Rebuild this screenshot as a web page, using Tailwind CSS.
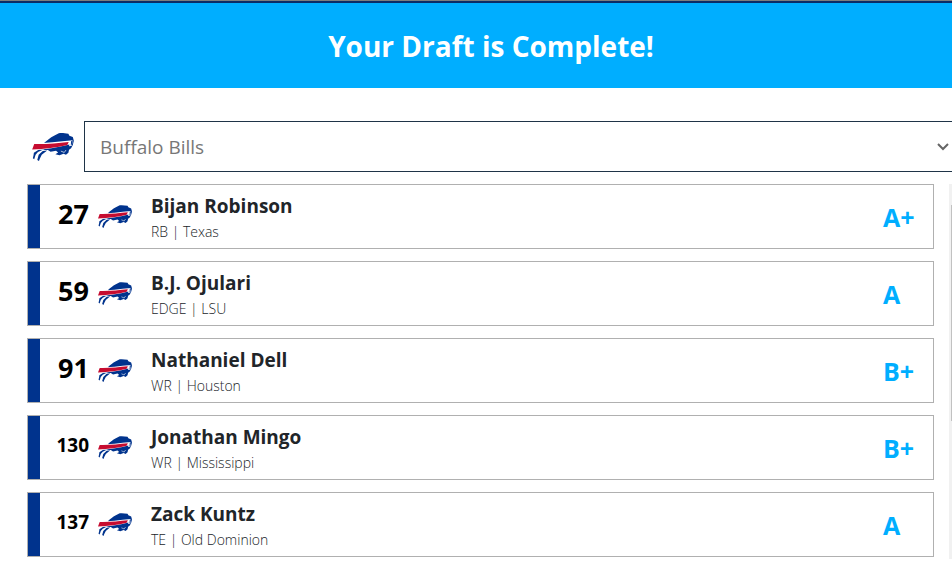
<!DOCTYPE html>
<html lang="en">
<head>
    <meta charset="UTF-8">
    <meta name="viewport" content="width=device-width, initial-scale=1.0">
    <title>Draft Results</title>
    <script src="https://cdn.jsdelivr.net/npm/@tailwindcss/browser@4"></script>
</head>
<body class="bg-white overflow-x-hidden font-['Open_Sans','Noto_Sans',sans-serif] text-[#212529]">
    <!-- Shared team logo -->
    <svg class="hidden">
        <symbol id="bills" viewBox="0 0 122 82">
            <path fill="#00338d" d="M36 28 C46 21 52 14 64 8 L78 1 C88 -1 96 2 106 2 L109 8 L119 12 L122 23 L119 35 L114 45 L108 49 L106 58 L99 64 L92 61 L80 65 L68 62 L76 57 L70 52 L54 55 L46 50 L36 50 L30 47 L35 42Z" />
            <path fill="#00338d" d="M5 58 L20 48 L33 48 L17 56 L10 64 L6 77 L2 74 L4 65Z M19 64 L31 53 L44 51 L28 64 L22 76 L20 82 L15 79Z" />
            <path fill="#fff" d="M5 30 C39 30 78 25 119 21 L116 37 L108 39 L109 34 C76 43 39 49 0 51Z" />
            <path fill="#c60c30" d="M6 32 C42 33 74 29 107 26 L103 35 C72 43 37 47 0 48Z" />
            <path fill="#00338d" d="M114 24 L119 21 L116 33 L113 37Z" />
            <path fill="none" stroke="#fff" stroke-width="2" d="M84 53 L94 57 L99 50" />
        </symbol>
    </svg>

    <div class="w-[calc(100%+30px)]">
        <div class="h-px bg-[#7d7d7d]"></div>
        <header class="bg-[#00aeff] border-t-2 border-[#0b2c66] h-[87px] flex items-center justify-center">
            <h1 class="text-[28px] leading-10 font-bold text-white">Your Draft is Complete!</h1>
        </header>

        <main class="pt-[33px] pl-[27px]">
            <div class="flex items-center pl-[5px]">
                <svg class="w-[42px] h-7 shrink-0 mr-[10px]"><use href="#bills" /></svg>
                <div class="relative grow">
                    <select aria-label="Team" class="appearance-none block w-full h-[51px] border border-[#1f3447] bg-white pt-[2px] pl-[15px] text-[19px] text-[#777]">
                        <option>Buffalo Bills</option>
                    </select>
                    <svg class="absolute right-[33px] top-[22px] w-3 h-2 pointer-events-none" viewBox="0 0 12 8" fill="none" stroke="#666" stroke-width="2"><path d="M1 1 L6 6 L11 1" /></svg>
                </div>
            </div>

            <div class="mt-3 flex">
                <ul id="picks" class="grow flex flex-col gap-3 pb-[2px]"></ul>
                <div class="w-12 shrink-0 pl-[15px]">
                    <div class="h-full bg-[#f1f1f1] pl-[2px] pt-[21px]">
                        <div class="h-[216px] bg-[#c1c1c1]"></div>
                    </div>
                </div>
            </div>
        </main>
    </div>

    <script>
        const picks = [
            [27, 'Bijan Robinson', 'RB | Texas', 'A+'],
            [59, 'B.J. Ojulari', 'EDGE | LSU', 'A'],
            [91, 'Nathaniel Dell', 'WR | Houston', 'B+'],
            [130, 'Jonathan Mingo', 'WR | Mississippi', 'B+'],
            [137, 'Zack Kuntz', 'TE | Old Dominion', 'A'],
        ];

        // Three digit picks use a smaller number so they fit the column
        document.getElementById('picks').innerHTML = picks.map(([pick, name, info, grade]) => `
            <li class="flex items-center h-[65px] border border-[#b0b0b0] bg-white">
                <div class="w-3 h-full bg-[#00338d]"></div>
                <div class="w-[49px] pb-1 text-right font-bold text-black ${pick > 99 ? 'text-[19px]' : 'text-[27px]'}">${pick}</div>
                <svg class="w-[34px] h-[23px] ml-[9px] shrink-0"><use href="#bills" /></svg>
                <div class="ml-[19px] pt-[2px] grow">
                    <div class="text-[19px] leading-7 font-bold">${name}</div>
                    <div class="text-sm leading-6 font-light">${info}</div>
                </div>
                <div class="w-[50px] pt-[2px] text-[25px] font-bold text-[#00aeff]">${grade}</div>
            </li>`).join('');
    </script>
</body>
</html>
